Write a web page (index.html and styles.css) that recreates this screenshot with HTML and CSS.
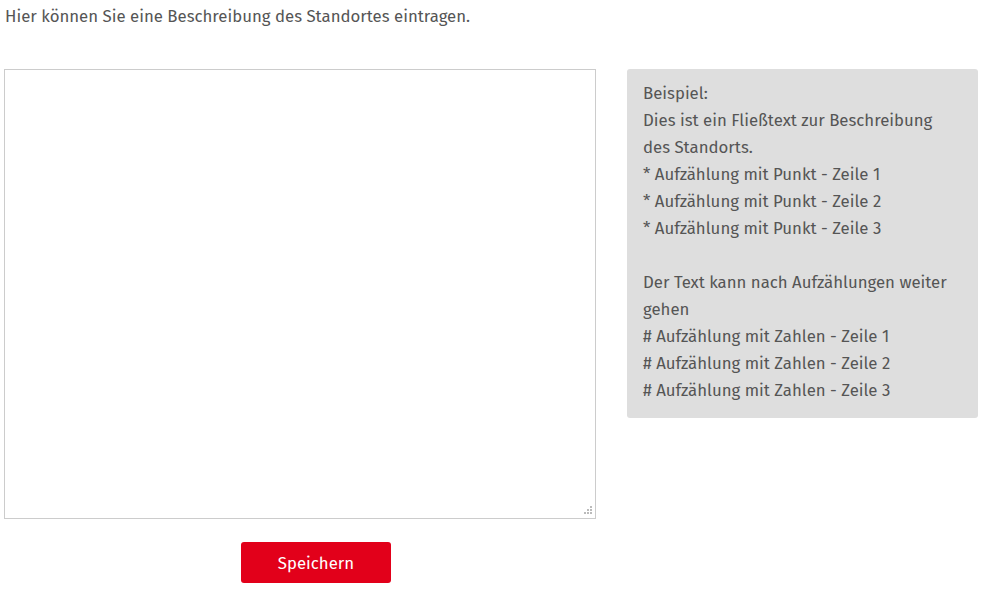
FILE: index.html
```html
<!DOCTYPE html>
<html lang="de">
<head>
  <meta charset="UTF-8" />
  <title>Standort Beschreibung</title>
  <link rel="stylesheet" href="styles.css">
</head>
<body>
  <p class="intro">Hier können Sie eine Beschreibung des Standortes eintragen.</p>
  <form class="editor">
    <div class="left">
      <div class="field">
        <textarea class="description"></textarea>
        <svg class="grip" width="9" height="9" viewBox="0 0 9 9">
          <rect x="6" y="0" width="2" height="2" fill="#bbb"/>
          <rect x="3" y="3" width="2" height="2" fill="#bbb"/>
          <rect x="6" y="3" width="2" height="2" fill="#bbb"/>
          <rect x="0" y="6" width="2" height="2" fill="#bbb"/>
          <rect x="3" y="6" width="2" height="2" fill="#bbb"/>
          <rect x="6" y="6" width="2" height="2" fill="#bbb"/>
        </svg>
      </div>
      <button type="submit" class="save">Speichern</button>
    </div>
    <div class="example">
      Beispiel:<br>
      Dies ist ein Fließtext zur Beschreibung des Standorts.<br>
      * Aufzählung mit Punkt - Zeile 1<br>
      * Aufzählung mit Punkt - Zeile 2<br>
      * Aufzählung mit Punkt - Zeile 3<br>
      <br>
      Der Text kann nach Aufzählungen weiter gehen<br>
      # Aufzählung mit Zahlen - Zeile 1<br>
      # Aufzählung mit Zahlen - Zeile 2<br>
      # Aufzählung mit Zahlen - Zeile 3
    </div>
  </form>
</body>
</html>
```
FILE: styles.css
```css
body {
  font-family: "Fira Sans", "Noto Sans", sans-serif;
  font-size: 16.8px;
  color: #555;
  background: #fff;
  margin: 0;
  padding: 0 10px 0 4px;
}
.intro {
  margin: 0;
  padding: 5px 0 0 1px;
  line-height: 22px;
}
.editor {
  display: flex;
  align-items: flex-start;
  gap: 31px;
  margin-top: 42px;
}
.left {
  display: flex;
  flex-direction: column;
}
.field {
  position: relative;
  line-height: 0;
}
.description {
  width: 592px;
  height: 450px;
  box-sizing: border-box;
  border: 1px solid #ccc;
  margin: 0;
  padding: 6px;
  font-family: inherit;
  font-size: 16px;
  color: #555;
  resize: none;
}
.grip {
  position: absolute;
  right: 3px;
  bottom: 4px;
}
.save {
  width: 150px;
  height: 41px;
  margin: 23px 0 0 237px;
  background: #e2001a;
  color: #fff;
  border: none;
  border-radius: 3px;
  font-family: inherit;
  font-size: 16.8px;
  cursor: pointer;
}
.example {
  width: 351px;
  box-sizing: border-box;
  background: #dedede;
  border-radius: 3px;
  padding: 11px 16px 14px;
  line-height: 27px;
}
```
